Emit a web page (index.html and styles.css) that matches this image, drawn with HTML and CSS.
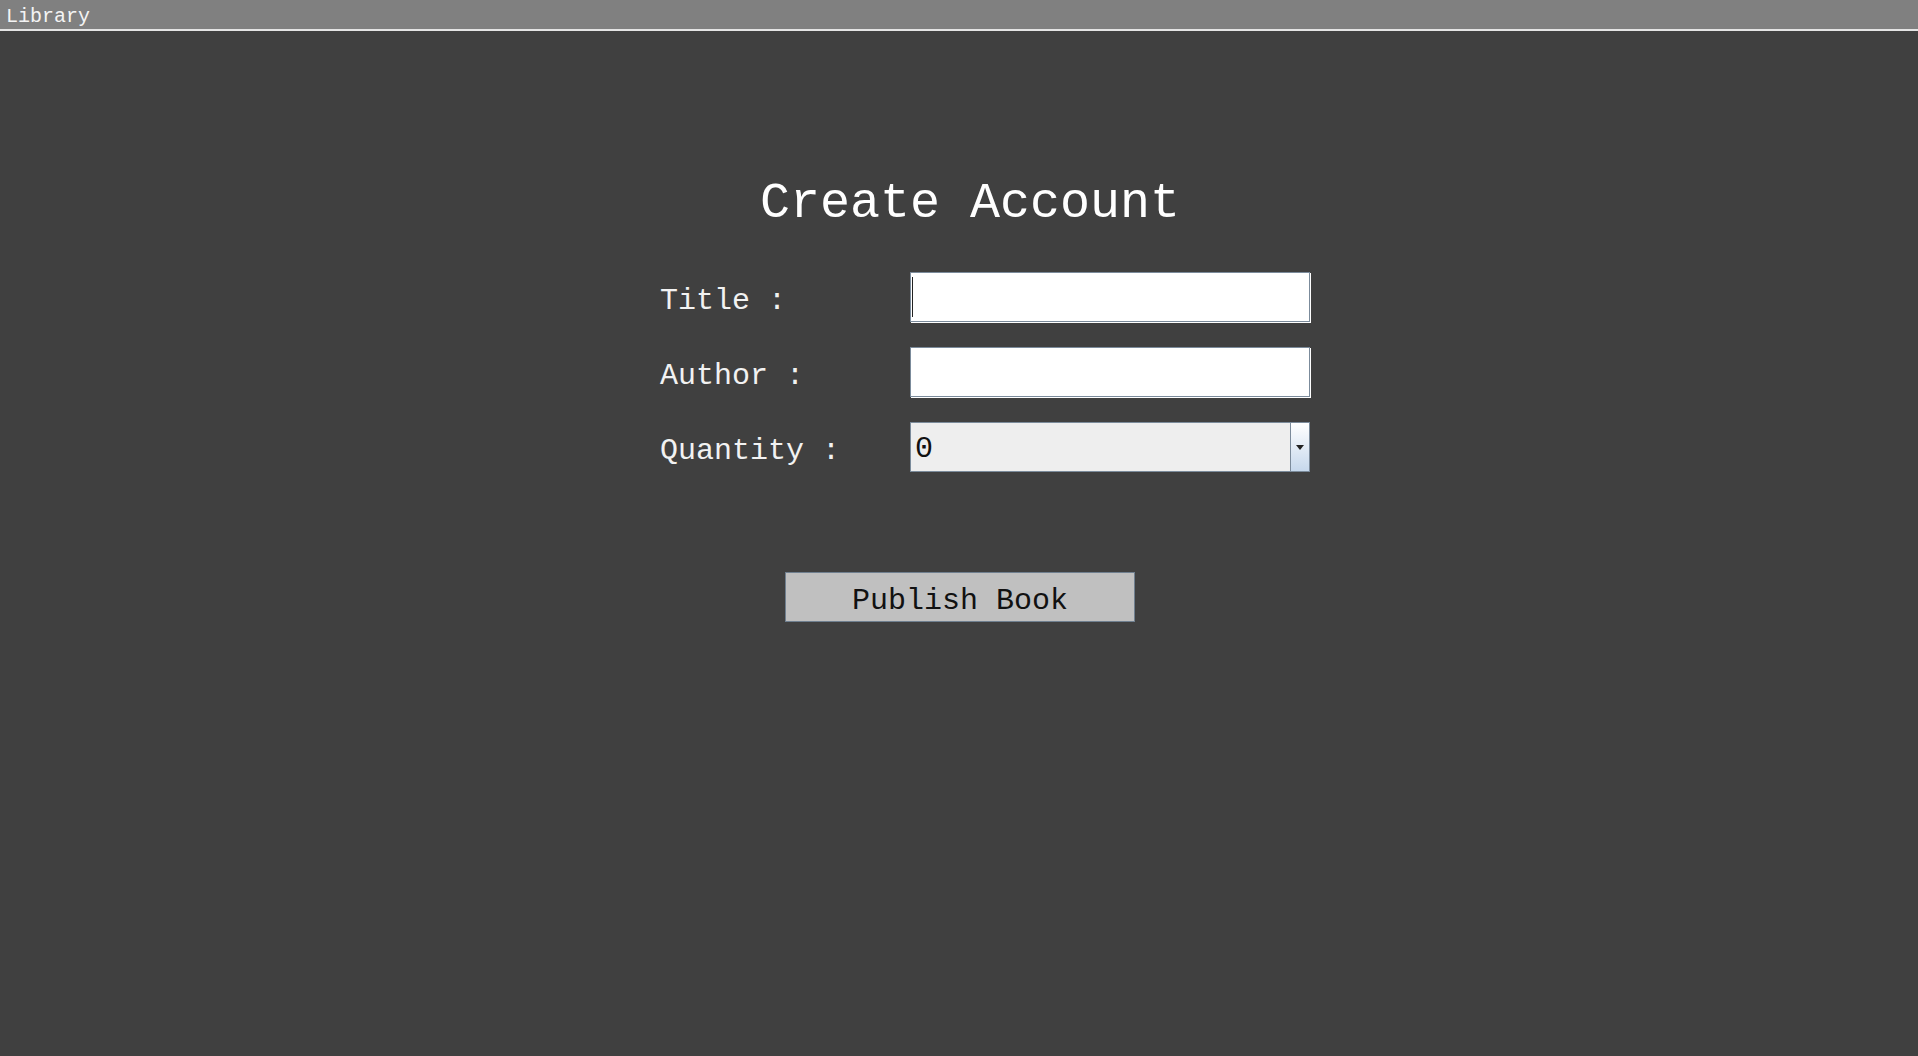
FILE: index.html
```html
<!DOCTYPE html>
<html>
<head>
<meta charset="utf-8">
<title>Library</title>
<link rel="stylesheet" href="styles.css">
</head>
<body>
<div class="titlebar"><span class="app-name">Library</span></div>
<main class="page">
  <h1 class="heading">Create Account</h1>
  <div class="form">
    <div class="label">Title :</div>
    <div class="field"><span class="caret"></span></div>
    <div class="label">Author :</div>
    <div class="field"></div>
    <div class="label">Quantity :</div>
    <div class="spinner">
      <div class="spinner-value">0</div>
      <div class="spinner-arrow"><span class="triangle"></span></div>
    </div>
  </div>
  <button class="publish">Publish Book</button>
</main>
</body>
</html>
```

FILE: styles.css
```css
html, body {
  margin: 0;
  padding: 0;
  background: #404040;
  height: 100%;
}
body {
  font-family: "Courier New", "Liberation Mono", monospace;
  color: #ffffff;
}
.titlebar {
  height: 29px;
  background: #808080;
  border-bottom: 2px solid #e4e4e4;
  display: flex;
  align-items: center;
  padding-left: 6px;
}
.app-name {
  font-size: 20px;
  line-height: 29px;
  color: #f4f4f4;
  padding-top: 3px;
}
.page {
  display: flex;
  flex-direction: column;
  align-items: flex-start;
}
.heading {
  margin: 0;
  margin-top: 148px;
  margin-left: 760px;
  font-size: 50px;
  font-weight: normal;
  line-height: 50px;
  color: #ffffff;
  letter-spacing: 0;
}
.form {
  margin-top: 43px;
  margin-left: 660px;
  display: grid;
  grid-template-columns: 250px 400px;
  grid-auto-rows: 50px;
  row-gap: 25px;
}
.label {
  font-size: 30px;
  line-height: 50px;
  padding-top: 4px;
  color: #f2f2f2;
}
.field {
  box-sizing: border-box;
  height: 50px;
  width: 400px;
  background: #ffffff;
  border: 1px solid #7b8b9b;
  box-shadow: 1px 1px 0 #ffffff;
  display: flex;
  align-items: center;
  padding-left: 1px;
}
.caret {
  width: 1px;
  height: 40px;
  background: #222222;
}
.spinner {
  box-sizing: border-box;
  height: 50px;
  width: 400px;
  border: 1px solid #7b8b9b;
  display: flex;
}
.spinner-value {
  flex: 1;
  background: #eeeeee;
  color: #111111;
  font-size: 30px;
  line-height: 48px;
  padding-left: 4px;
  padding-top: 2px;
  box-sizing: border-box;
}
.spinner-arrow {
  width: 18px;
  border-left: 1px solid #7b8b9b;
  background: linear-gradient(to bottom, #ffffff 0%, #eef4fa 30%, #c6d8ec 100%);
  display: flex;
  align-items: center;
  justify-content: center;
}
.triangle {
  width: 0;
  height: 0;
  border-left: 4px solid transparent;
  border-right: 4px solid transparent;
  border-top: 5px solid #222222;
  margin-top: 1px;
}
.publish {
  margin-top: 100px;
  margin-left: 785px;
  width: 350px;
  height: 50px;
  box-sizing: border-box;
  background: #c0c0c0;
  border: 1px solid #6f7f8f;
  font-family: "Courier New", "Liberation Mono", monospace;
  font-size: 30px;
  color: #111111;
  padding: 0;
  line-height: 48px;
  padding-top: 4px;
}
```
